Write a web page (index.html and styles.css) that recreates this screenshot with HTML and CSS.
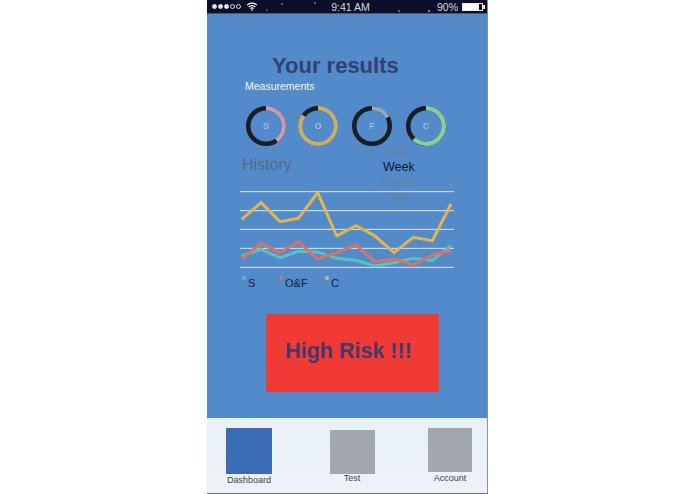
FILE: index.html
```html
<!DOCTYPE html>
<html lang="en">
<head>
<meta charset="utf-8">
<title>Your results</title>
<link rel="stylesheet" href="styles.css">
</head>
<body>
<div class="phone">
  <header class="status">
    <div class="status-left">
      <span class="signal"><i class="on"></i><i class="on"></i><i class="on"></i><i></i><i></i></span>
      <svg class="wifi" width="12" height="9" viewBox="0 0 12 9"><path d="M1 3.2a7 7 0 0 1 10 0M2.7 5a4.6 4.6 0 0 1 6.6 0M4.4 6.6a2.2 2.2 0 0 1 3.2 0" fill="none" stroke="#fff" stroke-width="1.1"/><path d="M6 9 4.9 7.7a1.6 1.6 0 0 1 2.2 0z" fill="#fff"/></svg>
    </div>
    <span class="time">9:41 AM</span>
    <div class="status-right">
      <span>90%</span>
      <span class="battery"><i></i></span>
    </div>
  </header>
  <main class="content">
    <h1 class="title">Your results</h1>
    <p class="measure">Measurements</p>
    <div class="rings">
      <svg class="ring" viewBox="0 0 40 40"><circle class="track" cx="20" cy="20" r="17.75"/><circle class="arc" cx="20" cy="20" r="17.75" pathLength="100" stroke="#c39cb6" stroke-dasharray="40 60"/><text x="20" y="23" class="ring-label">S</text></svg>
      <svg class="ring" viewBox="0 0 40 40"><circle class="track" cx="20" cy="20" r="17.75"/><circle class="arc" cx="20" cy="20" r="17.75" pathLength="100" stroke="#c4ae74" stroke-dasharray="85 15"/><text x="20" y="23" class="ring-label">O</text></svg>
      <svg class="ring" viewBox="0 0 40 40"><circle class="track" cx="20" cy="20" r="17.75"/><circle class="arc" cx="20" cy="20" r="17.75" pathLength="100" stroke="#8fa9c0" stroke-dasharray="17 83"/><text x="20" y="23" class="ring-label">F</text></svg>
      <svg class="ring" viewBox="0 0 40 40"><circle class="track" cx="20" cy="20" r="17.75"/><circle class="arc" cx="20" cy="20" r="17.75" pathLength="100" stroke="#8ccb9d" stroke-dasharray="62 38"/><text x="20" y="23" class="ring-label">C</text></svg>
    </div>
    <div class="history-row">
      <h2 class="history">History</h2>
      <ul class="periods">
        <li>Day</li>
        <li class="active">Week</li>
        <li>Month</li>
        <li>Year</li>
      </ul>
    </div>
    <svg class="chart" viewBox="15 30 645 240" width="215" height="80">
      <g class="grid">
        <line x1="15" x2="657" y1="35" y2="35"/>
        <line x1="15" x2="657" y1="92" y2="92"/>
        <line x1="15" x2="657" y1="148" y2="148"/>
        <line x1="15" x2="657" y1="205" y2="205"/>
        <line x1="15" x2="657" y1="262" y2="262"/>
      </g>
      <polyline class="series s" points="20,227 78,208 135,233 190,214 248,216 305,235 363,241 420,258 477,248 535,235 592,241 648,197"/>
      <polyline class="series of" points="20,237 78,190 135,218 190,185 248,237 305,218 363,195 420,245 477,237 535,255 592,225 648,212"/>
      <polyline class="series c" points="20,118 78,68 135,125 190,115 248,38 305,168 363,137 420,168 477,218 535,172 592,182 648,72"/>
    </svg>
    <div class="legend">
      <span class="key key-s">S</span>
      <span class="key key-of">O&amp;F</span>
      <span class="key key-c">C</span>
    </div>
    <div class="risk">High Risk !!!</div>
  </main>
  <nav class="tabs">
    <div class="tab tab-dash"><span class="tile tile-active"></span><span class="tab-label">Dashboard</span></div>
    <div class="tab tab-test"><span class="tile"></span><span class="tab-label">Test</span></div>
    <div class="tab tab-account"><span class="tile"></span><span class="tab-label">Account</span></div>
  </nav>
</div>
</body>
</html>
```
FILE: styles.css
```css
* { box-sizing: border-box; }
html, body { margin: 0; padding: 0; background: #fff; }
body { height: 494px; overflow: hidden; font-family: "Liberation Sans", Arial, sans-serif; }

.phone {
  width: 281px;
  height: 494px;
  margin-left: 207px;
  display: flex;
  flex-direction: column;
  border-right: 1px solid #8b8f96;
}

.status {
  height: 14px;
  flex: none;
  display: flex;
  align-items: center;
  justify-content: space-between;
  padding: 0 4px 0 5px;
  color: #d5d9e2;
  font-size: 11px;
  background-color: #0c0e2a;
  background-image:
    radial-gradient(circle at 75px 4px, #8089a0 0.6px, transparent 1px),
    radial-gradient(circle at 108px 3px, #9aa2b5 0.5px, transparent 1px),
    radial-gradient(circle at 192px 11px, #8089a0 0.6px, transparent 1px),
    radial-gradient(circle at 222px 11px, #b0b6c4 0.6px, transparent 1px),
    radial-gradient(circle at 60px 10px, #666f88 0.5px, transparent 1px);
  border-bottom: 1px solid #4d5563;
}
.status-left { display: flex; align-items: center; gap: 5px; width: 60px; }
.signal { display: flex; gap: 1px; }
.signal i { width: 5px; height: 5px; border-radius: 50%; border: 0.5px solid #d5d9e2; }
.signal i.on { background: #e8eaf0; }
.time { font-size: 10.5px; margin-right: 8px; }
.status-right { display: flex; align-items: center; gap: 4px; font-size: 10.5px; }
.battery { width: 21px; height: 8px; border: 1px solid #e8eaf0; display: block; position: relative; }
.battery i { display: block; width: 85%; height: 100%; background: #fff; }
.battery::after { content: ""; position: absolute; right: -3px; top: 1px; width: 1.5px; height: 4px; background: #e8eaf0; }

.content {
  flex: 1;
  background: #528aca;
  display: flex;
  flex-direction: column;
  padding-top: 38px;
  min-height: 0;
}
.title {
  margin: 0 0 0 65px;
  font-size: 22px;
  line-height: 28px;
  font-weight: 700;
  color: #32416f;
}
.measure {
  margin: -1px 0 0 38px;
  font-size: 10.5px;
  line-height: 14px;
  color: #f2f6fb;
}
.rings {
  display: flex;
  gap: 14px;
  margin: 13px 0 0 39px;
}
.ring { width: 40px; height: 40px; flex: none; }
.ring:first-child { margin-right: -2px; }
.track { fill: none; stroke: #1a1d24; stroke-width: 4.5; }
.arc { fill: none; stroke-width: 4.5; transform: rotate(-90deg); transform-origin: 20px 20px; }
.ring-label { font-size: 9px; font-weight: 700; text-anchor: middle; fill: #9dbbdb; font-family: "Liberation Sans", Arial, sans-serif; }

.history-row {
  display: flex;
  height: 32px;
  margin-top: 0;
}
.history {
  margin: 9px 0 0 35px;
  font-size: 16px;
  line-height: 20px;
  font-weight: 400;
  color: #5a6a85;
}
.periods {
  list-style: none;
  margin: -1px 0 0 75px;
  padding: 0;
  width: 64px;
  text-align: center;
  font-size: 12px;
  line-height: 15px;
  color: #6e7f99;
  height: 60px;
}
.periods .active { font-size: 12.5px; color: #0c1633; }

.chart { display: block; margin: 12px 0 0 33px; flex: none; }
.grid line { stroke: #dfe8f3; stroke-width: 3; }
.series { fill: none; stroke-width: 9; stroke-linejoin: miter; }
.series.s { stroke: #5dbfc0; }
.series.of { stroke: #d77468; }
.series.c { stroke: #e3b54e; }

.legend {
  display: flex;
  margin: 6px 0 0 35px;
  font-size: 11px;
  line-height: 14px;
  color: #0f1c3d;
}
.key { position: relative; padding-left: 6px; }
.key::before {
  content: "";
  position: absolute;
  left: 0;
  top: 0;
  width: 4px;
  height: 4px;
  border-radius: 50%;
}
.key-s::before { background: #5dbfc0; }
.key-of::before { background: #d77468; }
.key-c::before { background: #e3b54e; }
.key-s { width: 37px; }
.key-of { width: 46px; }

.risk {
  width: 173px;
  height: 78px;
  margin: 24px 0 0 59px;
  padding: 0 8px 3px 0;
  background: #ef3a36;
  color: #42396a;
  font-size: 21.5px;
  font-weight: 700;
  display: flex;
  align-items: center;
  justify-content: center;
}

.tabs {
  height: 76px;
  flex: none;
  background: linear-gradient(#e9eff7, #edf2f9);
  display: flex;
  padding-top: 10px;
  border-bottom: 1px solid #6d7076;
}
.tab { display: flex; flex-direction: column; align-items: center; flex: none; }
.tile { display: block; width: 44px; height: 44px; background: #a2a6ae; }
.tile-active { width: 46px; height: 46px; background: #3a6db5; }
.tab-label { font-size: 9px; line-height: 11px; color: #3a4258; margin-top: 1px; }
.tab-dash { width: 60px; margin-left: 12px; }
.tab-test { width: 60px; margin-left: 43px; padding-top: 2px; }
.tab-test .tab-label { margin-top: -1px; }
.tab-test .tile { width: 45px; }
.tab-account { width: 60px; margin-left: 38px; }
```
